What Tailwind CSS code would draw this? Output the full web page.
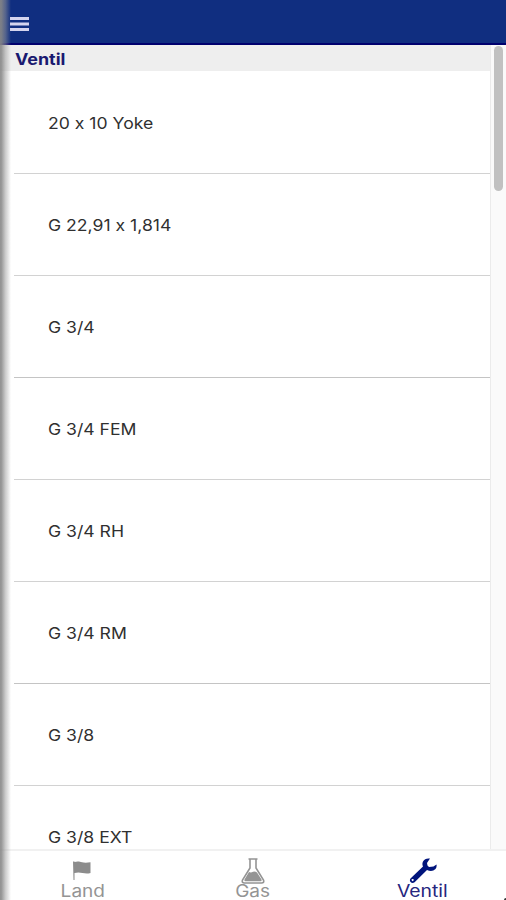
<!DOCTYPE html>
<html lang="de">
<head>
<meta charset="utf-8">
<title>Ventil</title>
<script src="https://cdn.jsdelivr.net/npm/@tailwindcss/browser@4"></script>
</head>
<body class="relative flex h-[900px] w-[506px] flex-col overflow-hidden bg-white font-['Inter','Liberation_Sans',sans-serif] [font-feature-settings:'calt'_0]">
<header class="flex h-[45px] shrink-0 items-center border-b-2 border-[#00006e] bg-[#102e80] pt-[4px] pl-[10px]">
<svg class="h-[14px] w-[19px]" viewBox="0 0 19 14" fill="#d4d4ee"><path d="M0 0h19v3H0zM0 5.5h19v3H0zM0 11h19v3H0z"/></svg>
</header>
<main class="flex h-[804px] shrink-0 overflow-hidden">
<section class="w-[490px]">
<h1 class="flex h-[26px] items-center bg-[#eeeeee] pt-px pl-[15px] text-[16px] font-bold text-[#191970]"><span class="origin-left scale-x-[1.12]">Ventil</span></h1>
<ul class="pl-[14px] text-[16px] text-[#303030]">
<li class="flex h-[103px] items-center border-b border-[#d2d2d2] pt-px pl-[34px]"><span class="origin-left scale-x-[1.1]">20 x 10 Yoke</span></li>
<li class="flex h-[102px] items-center border-b border-[#d2d2d2] pl-[34px]"><span class="origin-left scale-x-[1.1]">G 22,91 x 1,814</span></li>
<li class="flex h-[102px] items-center border-b border-[#c4c4c4] pl-[34px]"><span class="origin-left scale-x-[1.1]">G 3/4</span></li>
<li class="flex h-[102px] items-center border-b border-[#d2d2d2] pl-[34px]"><span class="origin-left scale-x-[1.1]">G 3/4 FEM</span></li>
<li class="flex h-[102px] items-center border-b border-[#d2d2d2] pl-[34px]"><span class="origin-left scale-x-[1.1]">G 3/4 RH</span></li>
<li class="flex h-[102px] items-center border-b border-[#c4c4c4] pl-[34px]"><span class="origin-left scale-x-[1.1]">G 3/4 RM</span></li>
<li class="flex h-[102px] items-center border-b border-[#d2d2d2] pl-[34px]"><span class="origin-left scale-x-[1.1]">G 3/8</span></li>
<li class="flex h-[102px] items-center pl-[34px]"><span class="origin-left scale-x-[1.1]">G 3/8 EXT</span></li>
</ul>
</section>
<div class="w-4 border-l border-[#ebebeb] bg-[#fafafa] pt-px pl-[3px]"><div class="h-[145px] w-[9px] rounded-full bg-[#c1c1c1]"></div></div>
</main>
<nav class="grid flex-1 grid-cols-3 border-t-2 border-[#f1f1f1] text-[17px] text-[#949494]">
<a class="flex flex-col items-center pt-[10px] pr-1">
<svg class="h-[19px] w-[18px]" viewBox="0 0 18 19" fill="#8c8c8c"><path d="M0 .5h1.500V19H.5zM1.500 1C5-.2 7 .8 9 1.300s5 .5 8.500 0V12c-3 .8-5.500.5-8 0s-4.500-1-8 0z"/></svg>
<span class="scale-x-[1.12] leading-[22px]">Land</span></a>
<a class="flex flex-col items-center pt-[7px]">
<svg class="h-[26px] w-[24px]" viewBox="0 0 24 26" fill="none" stroke="#949494" stroke-width="1.6"><path d="M7.500 1h9M9 1v9L1.500 22q-1 3 2 3h17q3 0 2-3L15 10V1"/><path d="M8 14q2 1 4-.2 2-.8 4 .7l4.500 7q.5 1.800-1 1.800h-15q-1.500 0-1-1.800z" fill="#949494" stroke="none"/></svg>
<span class="-mt-1 scale-x-[1.12] leading-[22px]">Gas</span></a>
<a class="flex flex-col items-center pt-[7px] pl-[2px] text-[#26267e]">
<svg class="h-[26px] w-[28px]" viewBox="0 0 28 26" fill="#00147c"><path fill-rule="evenodd" d="M21 .5q-5-.7-7 3-1.200 2.300 0 5L2 20q-2 2-.4 4t4 .3L18 12q5 2.500 8.500-1Q28 9 27.500 6.500L24.500 8.500 20 9 18.500 7.500 18 5zM3.600 21a1 1 0 1 0 .1 0z"/></svg>
<span class="-mt-1 scale-x-[1.14] leading-[22px]">Ventil</span></a>
</nav>
<div class="absolute top-0 bottom-0 left-0 w-[11px] bg-gradient-to-r from-[#888]/90 from-10% via-[#999]/50 to-transparent"></div>
<div class="absolute right-0 bottom-0 size-[2px] rounded-tl-full bg-[#333]"></div>
</body>
</html>
